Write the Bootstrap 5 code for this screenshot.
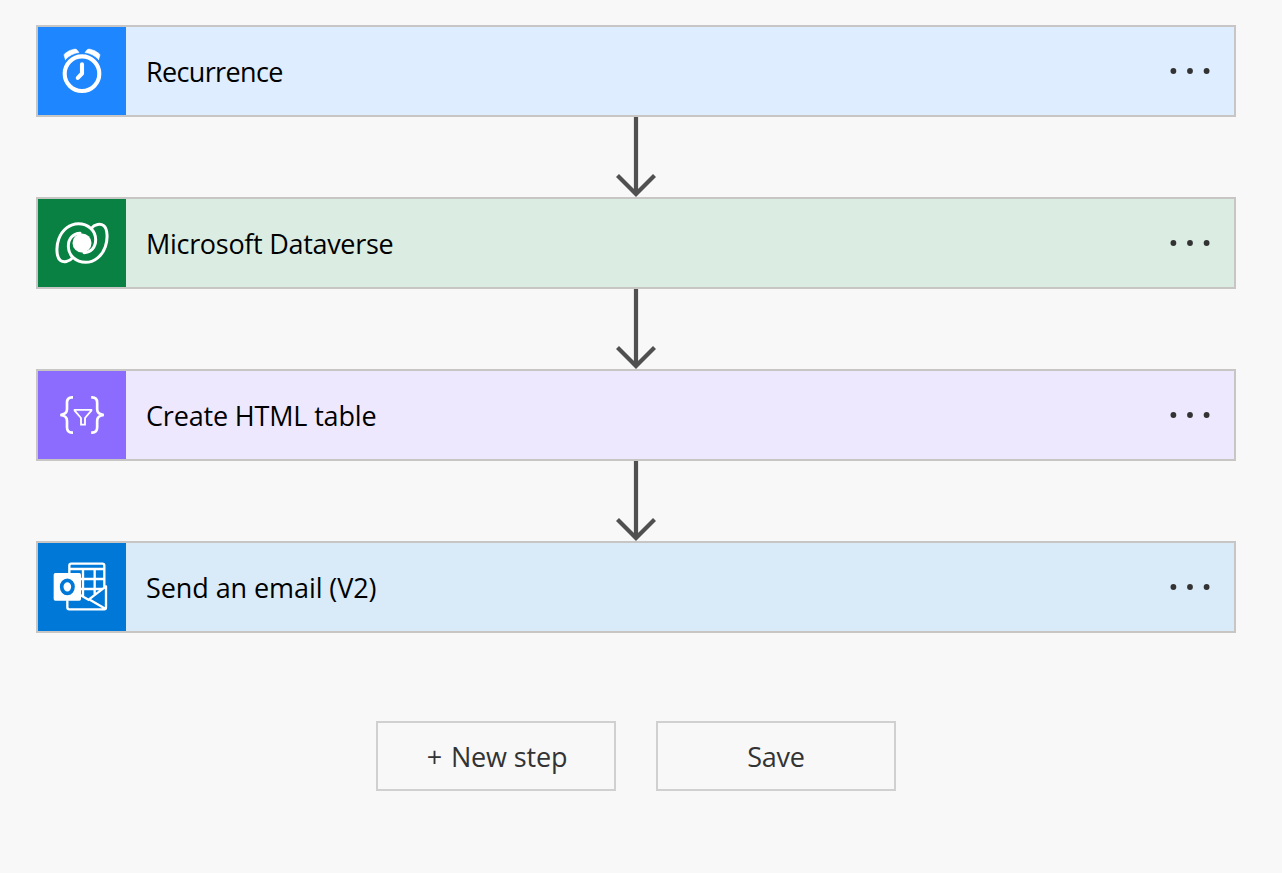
<!DOCTYPE html>
<html lang="en">
<head>
<meta charset="utf-8">
<meta name="viewport" content="width=device-width, initial-scale=1">
<title>Flow designer</title>
<link href="https://cdn.jsdelivr.net/npm/bootstrap@5.3.0/dist/css/bootstrap.min.css" rel="stylesheet">
<style>
body{background:#f8f8f8;font-family:"Open Sans","Noto Sans",sans-serif;font-size:27px;color:#000}
.flow{width:1272px;padding:25px 36px 0}
.step{height:92px;border:2px solid #c8c6c4;background:var(--tint)}
.step-icon{width:88px;height:88px;background:var(--brand)}
.step-title{margin-left:20px;line-height:36px;white-space:nowrap;padding-top:2px}
.step-menu{width:44px;height:8px;margin:0 22px 0 auto;padding:0;border:0;background:none;display:flex}
.recurrence{--brand:#1e86ff;--tint:#deedff}
.dataverse{--brand:#088142;--tint:#dbece3}
.data-op{--brand:#8c6cff;--tint:#eee8ff}
.outlook{--brand:#0078d7;--tint:#d9ebf9}
.flow-btn{width:240px;height:70px;border:2px solid #d0d0d0;border-radius:0;font-size:27px;color:#333;padding:2px 0 0;line-height:36px}
.t1{letter-spacing:-.65px}.t2{letter-spacing:-.3px}.t3{letter-spacing:-.17px}.t4{letter-spacing:-.08px}
.new-btn{letter-spacing:-.15px}
.save-btn{letter-spacing:-.3px}
.plus{margin-right:2px;padding-left:2px}
svg{display:block}
</style>
</head>
<body>
<svg width="0" height="0" class="position-absolute" aria-hidden="true">
<symbol id="dots" viewBox="0 0 44 8"><g fill="#333"><circle cx="5.4" cy="4" r="2.9"/><circle cx="22" cy="4" r="2.9"/><circle cx="38.6" cy="4" r="2.9"/></g></symbol>
<symbol id="arrow" viewBox="0 0 40 80"><path d="M20 0V76M1.500 58.500 20 77 38.500 58.500" fill="none" stroke="#505050" stroke-width="4.200"/></symbol>
</svg>
<main class="flow d-flex flex-column align-items-center">
  <section class="step recurrence w-100 d-flex align-items-center">
    <div class="step-icon"><svg width="88" height="88" viewBox="0 0 88 88" fill="none" stroke="#fff" stroke-linecap="round" stroke-linejoin="round">
      <circle cx="44" cy="46.700" r="17.300" stroke-width="4.100"/><path d="M44 37.300V46.500L39.800 50.900" stroke-width="4.100"/>
      <path id="bell" fill="#fff" stroke="#fff" stroke-width=".6" d="M27.400 32.500 26.200 28.800Q25.800 27.400 27 26.500Q31 23 36 22.200Q38.300 21.800 39.300 23.300L41 25.500Q33 26.600 27.400 32.500Z"/>
      <use href="#bell" transform="matrix(-1 0 0 1 88 0)"/></svg></div>
    <div class="step-title t1">Recurrence</div>
    <button class="step-menu" aria-label="More"><svg width="44" height="8"><use href="#dots"/></svg></button>
  </section>
  <svg width="40" height="80"><use href="#arrow"/></svg>
  <section class="step dataverse w-100 d-flex align-items-center">
    <div class="step-icon"><svg width="88" height="88" viewBox="12 15 264 264" fill="none" stroke="#fff" stroke-width="9" stroke-linecap="round">
      <circle cx="144" cy="147" r="28.500" fill="#fff" stroke="none"/>
      <path id="swirl" d="M116 191C106 204 88 206 79 199C67 190 66 158 74 136C84 107 108 89 133 89C163 89 185 110 185 137C185 160 171 175 150 176"/>
      <use href="#swirl" transform="rotate(180 144 147)"/></svg></div>
    <div class="step-title t2">Microsoft Dataverse</div>
    <button class="step-menu" aria-label="More"><svg width="44" height="8"><use href="#dots"/></svg></button>
  </section>
  <svg width="40" height="80"><use href="#arrow"/></svg>
  <section class="step data-op w-100 d-flex align-items-center">
    <div class="step-icon"><svg width="88" height="88" viewBox="12 15 264 264" fill="none" stroke="#fff">
      <path id="brace" stroke-width="8" d="M117 94H114Q99 94 99 110V130Q99 145 79 147Q99 149 99 164V184Q99 200 114 200H117"/>
      <use href="#brace" transform="matrix(-1 0 0 1 288.500 0)"/>
      <path stroke-width="5.500" d="M122 131.500H172V134L153 156V176H141V156L122 134Z"/></svg></div>
    <div class="step-title t3">Create HTML table</div>
    <button class="step-menu" aria-label="More"><svg width="44" height="8"><use href="#dots"/></svg></button>
  </section>
  <svg width="40" height="80"><use href="#arrow"/></svg>
  <section class="step outlook w-100 d-flex align-items-center">
    <div class="step-icon"><svg width="88" height="88" viewBox="12 15 264 264" fill="none" stroke="#fff" stroke-width="7" stroke-linejoin="round">
      <path d="M106 106V83Q106 77 112 77H205Q211 77 211 83V147M106 93H211M147 93V178M182 93V172M141 123H211M141 153H205M100 187V208Q100 214 106 214H211Q216 214 216 208V145L165 184L214 212M140 172L166 187"/>
      <rect x="59" y="105" width="82" height="83" rx="5" fill="#fff" stroke="none"/>
      <ellipse cx="100" cy="146.500" rx="17" ry="19.500" stroke="#0078d7" stroke-width="11"/></svg></div>
    <div class="step-title t4">Send an email (V2)</div>
    <button class="step-menu" aria-label="More"><svg width="44" height="8"><use href="#dots"/></svg></button>
  </section>
  <div class="d-flex" style="gap:40px;margin-top:88px">
    <button class="btn flow-btn new-btn"><span class="plus">+</span> New step</button>
    <button class="btn flow-btn save-btn">Save</button>
  </div>
</main>
<script src="https://cdn.jsdelivr.net/npm/bootstrap@5.3.0/dist/js/bootstrap.bundle.min.js"></script>
</body>
</html>
